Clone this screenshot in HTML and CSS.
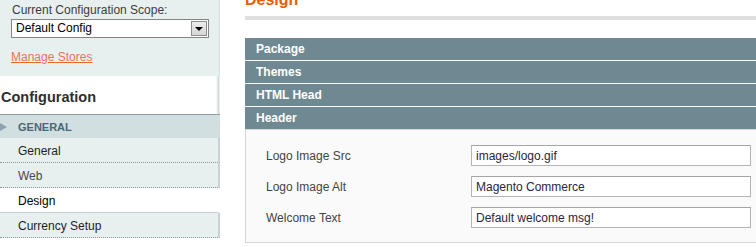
FILE: index.html
```html
<!DOCTYPE html>
<html lang="en">
<head>
    <meta charset="UTF-8">
    <meta name="viewport" content="width=device-width, initial-scale=1.0">
    <title>Configuration / Design</title>
    <link rel="stylesheet" href="styles.css">
</head>
<body>
    <div class="page">
        <aside class="side-col">
            <div class="scope">
                <p class="scope-label">Current Configuration Scope:</p>
                <div class="scope-select">
                    <span class="scope-value">Default Config</span>
                    <span class="select-btn"><span class="select-arrow"></span></span>
                </div>
                <a class="manage-link" href="#">Manage Stores</a>
            </div>

            <h3 class="side-title">Configuration</h3>

            <ul class="tabs">
                <li class="tab-group"><span class="group-arrow"></span>GENERAL</li>
                <li class="tab"><a href="#">General</a></li>
                <li class="tab"><a href="#" class="visited">Web</a></li>
                <li class="tab active"><a href="#">Design</a></li>
                <li class="tab"><a href="#">Currency Setup</a></li>
            </ul>
        </aside>

        <main class="main-col">
            <div class="content-header">
                <h3>Design</h3>
            </div>

            <div class="section-head">Package</div>
            <div class="section-head">Themes</div>
            <div class="section-head">HTML Head</div>
            <div class="section-head last">Header</div>

            <fieldset class="config">
                <div class="config-row">
                    <label for="logoSrc">Logo Image Src</label>
                    <input type="text" id="logoSrc" value="images/logo.gif">
                </div>
                <div class="config-row">
                    <label for="logoAlt">Logo Image Alt</label>
                    <input type="text" id="logoAlt" value="Magento Commerce">
                </div>
                <div class="config-row">
                    <label for="welcome">Welcome Text</label>
                    <input type="text" id="welcome" value="Default welcome msg!">
                </div>
            </fieldset>
        </main>
    </div>
</body>
</html>
```

FILE: styles.css
```css
* {
    margin: 0;
    padding: 0;
    box-sizing: border-box;
}

body {
    font-family: 'Liberation Sans', Arial, sans-serif;
    font-size: 12px;
    color: #2f2f2f;
    background: #fff;
    height: 247px;
    overflow: hidden;
}

.page {
    display: flex;
    align-items: flex-start;
}

/* left column */
.side-col {
    width: 220px;
    flex-shrink: 0;
}

.scope {
    background: #e7efef;
    border-right: 1px solid #d3e0e2;
    padding: 3px 11px 12px 11px;
}

.scope-label {
    line-height: 14px;
    padding-left: 1px;
    color: #3d3d3d;
}

.scope-select {
    margin-top: 2px;
    width: 198px;
    height: 19px;
    background: #fff;
    border: 1px solid #858585;
    display: flex;
    align-items: center;
    justify-content: space-between;
    padding: 0 1px 0 4px;
}

.scope-value {
    color: #000;
    line-height: 17px;
}

.select-btn {
    width: 16px;
    height: 15px;
    background: linear-gradient(#ececec, #d6d6d6);
    border: 1px solid #8e8e8e;
    display: flex;
    align-items: center;
    justify-content: center;
}

.select-arrow {
    width: 0;
    height: 0;
    border-left: 4px solid transparent;
    border-right: 4px solid transparent;
    border-top: 4px solid #000;
    margin-top: 1px;
}

.manage-link {
    display: inline-block;
    margin-top: 12px;
    line-height: 14px;
    color: #ec7652;
    text-decoration: underline;
    text-decoration-color: #eb6a2c;
}

.side-title {
    height: 39px;
    padding: 4px 0 0 1px;
    line-height: 34px;
    font-size: 14.5px;
    font-weight: bold;
    color: #2f2f2f;
    background: linear-gradient(to left, #e7efef 0, #e7efef 1px, #c9cfd1 1px, #fff 4px);
    border-bottom: 1px solid #8e9ea3;
}

.tabs {
    list-style: none;
}

.tab-group {
    height: 23px;
    padding-top: 1px;
    line-height: 22px;
    background: #d1dfe1;
    color: #4b6877;
    font-size: 11px;
    font-weight: bold;
    padding-left: 18px;
    position: relative;
}

.group-arrow {
    position: absolute;
    left: 0;
    top: 8px;
    width: 0;
    height: 0;
    border-top: 4px solid transparent;
    border-bottom: 4px solid transparent;
    border-left: 7px solid #8ea3ad;
}

.tab a {
    display: block;
    height: 25px;
    padding-top: 2px;
    line-height: 22px;
    padding-left: 18px;
    background: #e7efef;
    border-right: 2px solid #c6d3d6;
    border-bottom: 1px dotted #8a9799;
    color: #1f1f1f;
    text-decoration: none;
}

.tab a.visited {
    color: #4a4a4a;
}

.tab.active a {
    background: #fff;
    border-right-color: #fff;
    border-bottom: 1px solid #c6d3d6;
    color: #000;
}

/* right column */
.main-col {
    margin-left: 25px;
    width: 540px;
    flex-shrink: 0;
}

.content-header {
    border-bottom: 4px solid #dfdfdf;
    padding-bottom: 7px;
    margin-top: -9px;
    margin-bottom: 18px;
}

.content-header h3 {
    font-size: 16px;
    line-height: 18px;
    color: #eb5e00;
    font-weight: bold;
}

.section-head {
    height: 22px;
    padding-top: 1px;
    line-height: 21px;
    padding-left: 11px;
    margin-bottom: 1px;
    background: #6f8992;
    color: #fff;
    font-weight: bold;
}

.section-head.last {
    margin-bottom: 0;
}

.config {
    border: 1px solid #d6d6d6;
    background: #fafafa;
    padding: 15px 0 14px 20px;
    min-width: 0;
}

.config-row {
    display: flex;
    align-items: center;
    height: 21px;
    margin-bottom: 10px;
}

.config-row:last-child {
    margin-bottom: 0;
}

.config-row label {
    width: 205px;
    color: #444;
}

.config-row input {
    width: 280px;
    height: 21px;
    padding: 0 4px;
    border: 1px solid #b4b4b4;
    border-top-color: #a5a5a5;
    font-family: 'Liberation Sans', Arial, sans-serif;
    font-size: 12px;
    color: #2b2440;
    background: #fff;
}
```
